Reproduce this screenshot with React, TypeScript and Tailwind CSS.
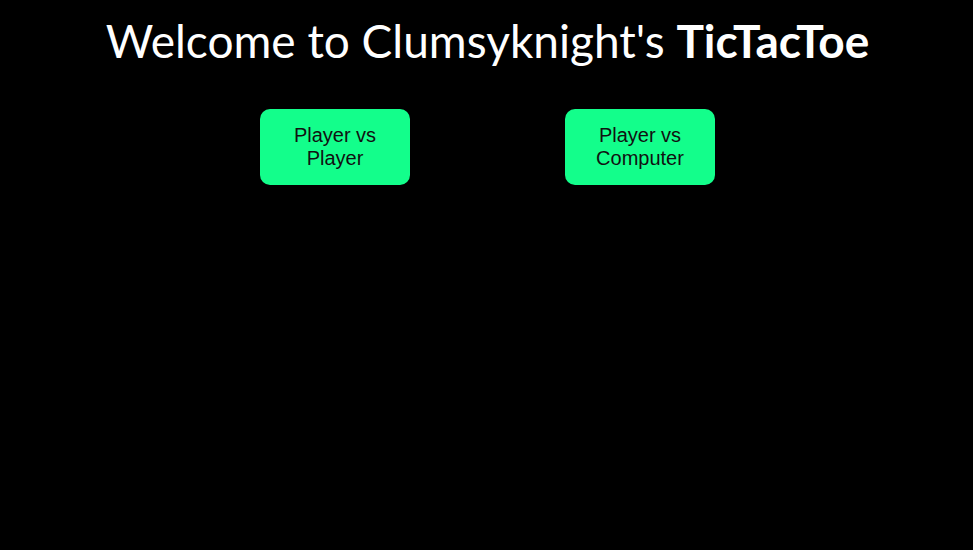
export default function App() {
  return (
    <div className="min-h-[550px] w-full bg-black font-['Lato',sans-serif] text-white">
      <h1 className="pt-[14px] pl-[2px] text-center text-[46px] leading-[54px] font-normal tracking-[0px]">
        Welcome to Clumsyknight&apos;s <span className="font-bold">TicTacToe</span>
      </h1>
      <div className="mt-[41px] flex justify-center gap-[155px] pl-[2px]">
        <button className="h-[76px] w-[150px] rounded-[10px] bg-[#13fe8b] px-2 font-['Liberation_Sans',Arial,sans-serif] text-[20px] leading-[23px] text-[#111]">
          Player vs
          <br />
          Player
        </button>
        <button className="h-[76px] w-[150px] rounded-[10px] bg-[#13fe8b] px-2 font-['Liberation_Sans',Arial,sans-serif] text-[20px] leading-[23px] text-[#111]">
          Player vs
          <br />
          Computer
        </button>
      </div>
    </div>
  );
}
